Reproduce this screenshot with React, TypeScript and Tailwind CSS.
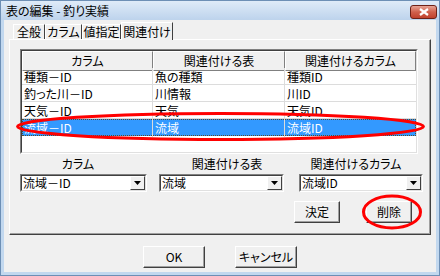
import React from 'react';

const FONT = "font-['Noto_Sans_CJK_JP','Noto_Sans',sans-serif] [font-feature-settings:'palt']";

const ROWS = [
    ['種類－ID', '魚の種類', '種類ID'],
    ['釣った川－ID', '川情報', '川ID'],
    ['天気－ID', '天気', '天気ID'],
    ['流域－ID', '流域', '流域ID'],
];

const TABS = [
    { label: '全般', w: 'w-[32px]' },
    { label: 'カラム', w: 'w-[37px]' },
    { label: '値指定', w: 'w-[39px]' },
];

const Btn: React.FC<{ label: string; className?: string }> = ({ label, className }) => (
    <div
        className={`flex items-center justify-center bg-[#f0f0f0] border border-t-white border-l-white border-r-[#404040] border-b-[#404040] shadow-[inset_-1px_-1px_0_#a0a0a0] text-[12px] text-black ${className ?? ''}`}
    >
        {label}
    </div>
);

const Combo: React.FC<{ value: string; w: string }> = ({ value, w }) => (
    <div className={`${w} h-[18px] flex bg-white border border-t-[#808080] border-l-[#808080] border-r-white border-b-white`}>
        <div className="flex-1 flex border border-t-[#404040] border-l-[#404040] border-r-[#e0e0e0] border-b-[#e0e0e0]">
            <div className="flex-1 flex items-center pl-[1px] text-[12px] leading-none text-black whitespace-nowrap">{value}</div>
            <div className="w-[15px] flex items-center justify-center bg-[#f0f0f0] border border-t-white border-l-white border-r-[#404040] border-b-[#404040]">
                <svg width="7" height="4" viewBox="0 0 7 4">
                    <path d="M0 0h7L3.5 4z" fill="#000" />
                </svg>
            </div>
        </div>
    </div>
);

export default function App() {
    return (
        <div className={`relative w-[440px] h-[276px] flex flex-col bg-[#c2d8ef] border border-[#6d8fb5] ${FONT}`}>
            {/* title bar */}
            <div className="h-[19px] flex items-center justify-between pl-[5px] pr-[2px] bg-gradient-to-b from-[#dfebf8] to-[#bdd3ec]">
                <span className="text-[12px] text-black leading-none">表の編集 - 釣り実績</span>
                <div className="w-[27px] h-[14px] mt-[3px] flex items-center justify-center rounded-[3px] border border-[#6e2116] bg-gradient-to-b from-[#e6a496] via-[#d0604c] to-[#c0412d]">
                    <svg width="10" height="8" viewBox="0 0 10 8">
                        <path d="M1 1l8 6M9 1L1 7" stroke="#fff" strokeWidth="2.2" />
                    </svg>
                </div>
            </div>

            {/* client */}
            <div className="flex-1 mx-[3px] mb-[3px] flex flex-col bg-[#f0f0f0] px-[5px]">
                {/* tabs */}
                <div className="flex items-end pl-[4px] h-[19px] pt-[1px]">
                    {TABS.map((t) => (
                        <div
                            key={t.label}
                            className={`${t.w} h-[15px] flex items-center justify-center text-[12px] text-black border-t border-l border-r border-t-white border-l-white border-r-[#404040]`}
                        >
                            {t.label}
                        </div>
                    ))}
                    <div className="w-[52px] h-[18px] -mb-[1px] relative z-10 flex items-center justify-center text-[12px] text-black bg-[#f0f0f0] border-t border-l border-r border-t-white border-l-white border-r-[#404040]">
                        関連付け
                    </div>
                </div>

                {/* panel */}
                <div className="h-[196px] flex flex-col border border-t-white border-l-white border-r-[#404040] border-b-[#404040] shadow-[inset_-1px_-1px_0_#a0a0a0] pt-[9px] pl-[10px]">
                    {/* grid */}
                    <div className="w-[398px] h-[105px] border border-t-[#808080] border-l-[#808080] border-r-white border-b-white">
                        <div className="h-full flex flex-col bg-white border border-t-[#404040] border-l-[#404040] border-r-[#e0e0e0] border-b-[#e0e0e0]">
                            <div className="grid grid-cols-[131px_132px_131px] h-[17px] border-b border-[#000]">
                                {['カラム', '関連付ける表', '関連付けるカラム'].map((h) => (
                                    <div
                                        key={h}
                                        className="flex items-center justify-center bg-[#f0f0f0] border border-t-white border-l-white border-r-[#808080] border-b-[#808080] text-[12px] text-black whitespace-nowrap"
                                    >
                                        {h}
                                    </div>
                                ))}
                            </div>
                            {ROWS.map((r, i) => {
                                const sel = i === ROWS.length - 1;
                                return (
                                    <div
                                        key={r[0]}
                                        className={`grid grid-cols-[131px_132px_131px] h-[17px] ${
                                            sel
                                                ? 'bg-[#3399ff] text-white outline-1 outline-dotted outline-[#5a4a2a] -outline-offset-1'
                                                : 'border-b border-[#dcdcdc] text-black'
                                        }`}
                                    >
                                        {r.map((c, j) => (
                                            <div
                                                key={j}
                                                className={`flex items-center pl-[2px] text-[12px] whitespace-nowrap ${j < 2 ? 'border-r border-[#dcdcdc]' : ''}`}
                                            >
                                                {c}
                                            </div>
                                        ))}
                                    </div>
                                );
                            })}
                        </div>
                    </div>

                    {/* labels */}
                    <div className="flex h-[19px] items-center text-[12px] text-black">
                        <div className="w-[116px] flex justify-center whitespace-nowrap">カラム</div>
                        <div className="w-[182px] flex justify-center whitespace-nowrap">関連付ける表</div>
                        <div className="w-[76px] flex justify-center whitespace-nowrap">関連付けるカラム</div>
                    </div>

                    {/* combos */}
                    <div className="flex mt-[1px]">
                        <Combo value="流域－ID" w="w-[127px]" />
                        <div className="ml-[12px]">
                            <Combo value="流域" w="w-[125px]" />
                        </div>
                        <div className="ml-[15px]">
                            <Combo value="流域ID" w="w-[124px]" />
                        </div>
                    </div>

                    {/* actions */}
                    <div className="flex mt-[9px] pl-[274px] gap-[26px]">
                        <Btn label="決定" className="w-[46px] h-[22px]" />
                        <Btn label="削除" className="w-[46px] h-[22px]" />
                    </div>
                </div>

                {/* dialog buttons */}
                <div className="flex justify-center gap-[30px] mt-[11px]">
                    <Btn label="OK" className="w-[62px] h-[22px]" />
                    <Btn label="キャンセル" className="w-[62px] h-[22px]" />
                </div>
            </div>

            {/* red annotations */}
            <svg className="absolute left-0 top-0 pointer-events-none" width="440" height="276" viewBox="0 0 440 276">
                <ellipse cx="219.5" cy="125.5" rx="203" ry="13" fill="none" stroke="#ff0000" strokeWidth="3" />
                <ellipse cx="391" cy="211" rx="28.5" ry="16" fill="none" stroke="#ff0000" strokeWidth="3" />
            </svg>
        </div>
    );
}
